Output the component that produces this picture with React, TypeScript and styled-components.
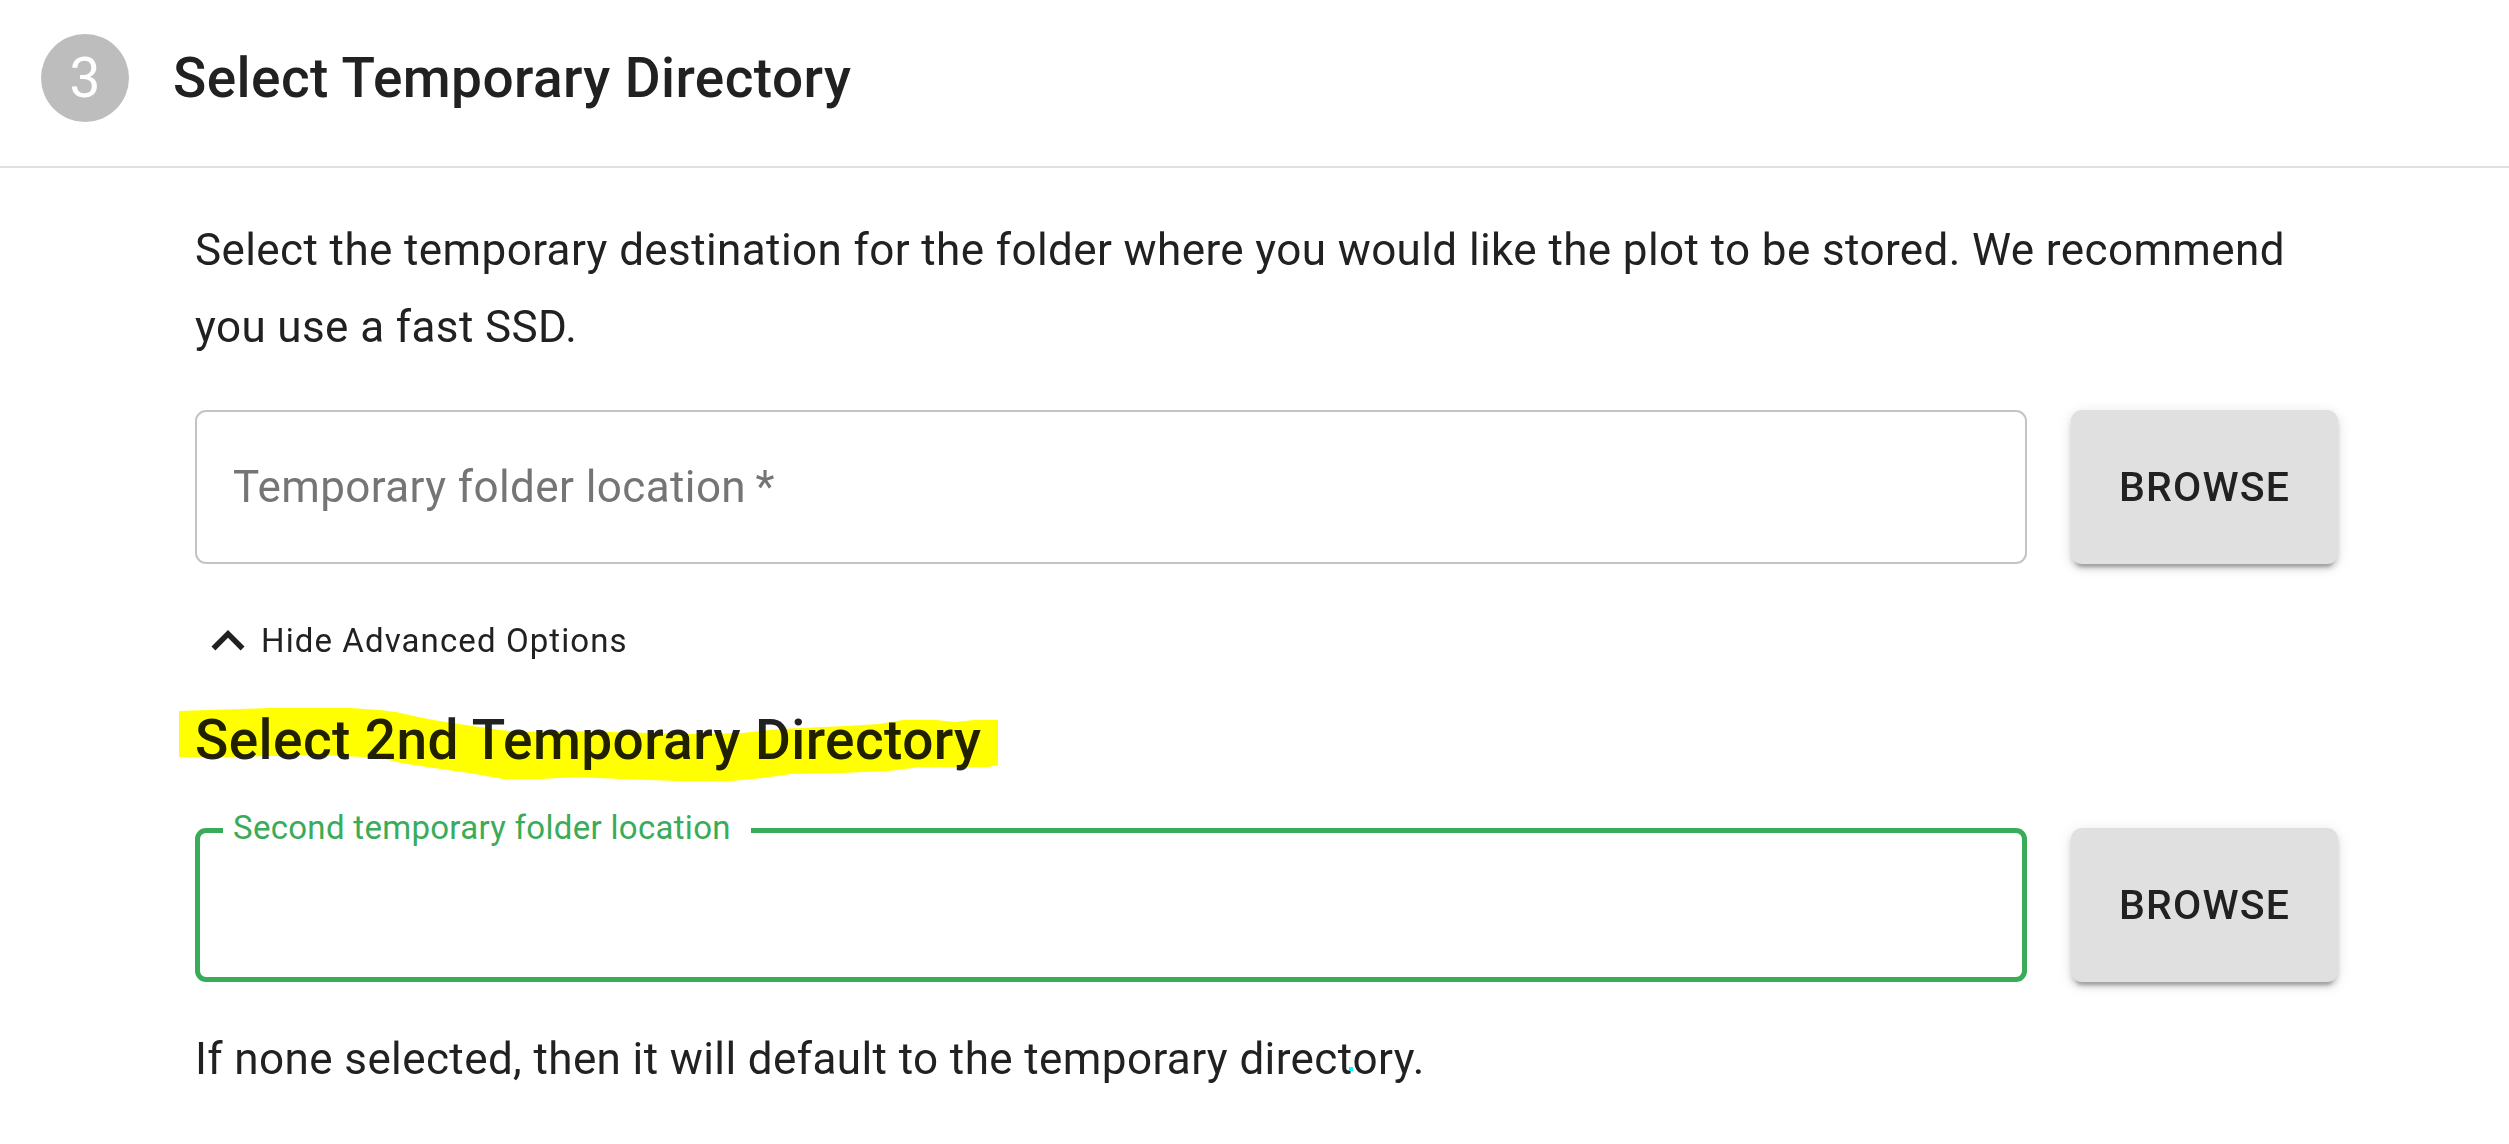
import React from "react";
import styled, { createGlobalStyle, css } from "styled-components";

const ink = "#212121";
const green = "#3aac59";

const GlobalStyle = createGlobalStyle`
  *, *::before, *::after { box-sizing: border-box; }
  body {
    margin: 0;
    background: #fff;
    color: ${ink};
    font-family: Roboto, "Liberation Sans", sans-serif;
    font-size: 44px;
  }
`;

const Header = styled.header`
  display: flex;
  align-items: center;
  gap: 44px;
  padding: 34px 41px 44px;
  border-bottom: 2px solid #e0e0e0;
`;

const StepBadge = styled.span`
  display: flex;
  align-items: center;
  justify-content: center;
  width: 88px;
  height: 88px;
  border-radius: 50%;
  background: #bdbdbd;
  color: #fff;
  font-size: 55px;
  line-height: 88px;
`;

const headingText = css`
  margin: 0;
  font-size: 55px;
  font-weight: 500;
  line-height: 88px;
  letter-spacing: 0.0075em;
`;

const Title = styled.h1`
  ${headingText}
`;

const Content = styled.main`
  display: flex;
  flex-direction: column;
  gap: 44px;
  padding: 44px 171px 44px 195px;
`;

const Text = styled.p<{ $leading: number }>`
  margin: 0;
  line-height: ${(p) => p.$leading}px;
  letter-spacing: 0.009em;
`;

const FieldRow = styled.div`
  display: flex;
  gap: 44px;
`;

const Field = styled.div`
  position: relative;
  flex: 1;
  display: flex;
`;

const Input = styled.input<{ $active?: boolean }>`
  width: 100%;
  height: 154px;
  padding: 0 38px;
  border: ${(p) => (p.$active ? `5px solid ${green}` : "2px solid #c4c4c4")};
  border-radius: 11px;
  background: transparent;
  color: ${ink};
  font: inherit;
  outline: none;
`;

const Label = styled.label<{ $floating?: boolean }>`
  position: absolute;
  white-space: nowrap;
  letter-spacing: 0.009em;
  ${(p) =>
    p.$floating
      ? css`
          top: -22px;
          left: 28px;
          padding: 0 20px 0 10px;
          background: #fff;
          color: ${green};
          font-size: 33px;
          line-height: 44px;
        `
      : css`
          top: 44px;
          left: 38px;
          color: #757575;
          line-height: 66px;
        `}
`;

const BrowseButton = styled.button`
  padding: 0 48px;
  border: 0;
  border-radius: 11px;
  background: #e0e0e0;
  color: ${ink};
  font-family: inherit;
  font-size: 41px;
  font-weight: 500;
  letter-spacing: 0.02857em;
  text-transform: uppercase;
  box-shadow:
    0 8px 3px -5px rgba(0, 0, 0, 0.2),
    0 5px 5px 0 rgba(0, 0, 0, 0.14),
    0 3px 14px 0 rgba(0, 0, 0, 0.12);
`;

const Advanced = styled.section`
  display: flex;
  flex-direction: column;
  align-items: flex-start;
  gap: 22px;
`;

const Toggle = styled.button`
  display: flex;
  align-items: center;
  padding: 0;
  border: 0;
  background: none;
  color: ${ink};
  font-family: inherit;
  font-size: 33px;
  line-height: 66px;
  letter-spacing: 0.03333em;
`;

const Chevron = styled.svg`
  width: 66px;
  height: 66px;
  fill: currentColor;
`;

const MarkedHeading = styled.h2`
  ${headingText}
  position: relative;
`;

const Highlight = styled.svg`
  position: absolute;
  top: 12px;
  left: -16px;
  width: 819px;
  height: 73px;
  fill: #ff0;
  mix-blend-mode: multiply;
  pointer-events: none;
`;

const Speck = styled.span`
  position: relative;

  &::after {
    content: "";
    position: absolute;
    right: 0;
    bottom: 14px;
    width: 4px;
    height: 4px;
    background: #0ff;
  }
`;

const App: React.FC = () => (
  <>
    <GlobalStyle />
    <Header>
      <StepBadge>3</StepBadge>
      <Title>Select Temporary Directory</Title>
    </Header>
    <Content>
      <Text $leading={77}>
        Select the temporary destination for the folder where you would like the
        plot to be stored. We recommend you use a fast SSD.
      </Text>
      <FieldRow>
        <Field>
          <Input id="temporary-folder" type="text" required />
          <Label htmlFor="temporary-folder">Temporary folder location{"\u2009"}*</Label>
        </Field>
        <BrowseButton type="button">Browse</BrowseButton>
      </FieldRow>
      <Advanced>
        <Toggle type="button" aria-expanded="true">
          <Chevron viewBox="0 0 24 24" aria-hidden="true">
            <path d="M12 8l-6 6 1.41 1.41L12 10.83l4.59 4.58L18 14z" />
          </Chevron>
          Hide Advanced Options
        </Toggle>
        <MarkedHeading>
          Select 2nd Temporary Directory
          <Highlight viewBox="179 708 819 73" aria-hidden="true">
            <path d="M179 711L209 710L240 709L271 708H351L379 710L396 712L418 717L445 722L473 726L500 730L522 732L566 731L654 733L687 734L741 733L780 729L846 726L879 724L903 720H936L955 722L974 720H998V765L988 767H920L889 771L840 773L791 774L763 778L732 781H678L621 779L577 777L541 779H503L475 774L434 768L401 763L385 759L363 757L319 755L270 756L231 757H179Z" />
          </Highlight>
        </MarkedHeading>
      </Advanced>
      <FieldRow>
        <Field>
          <Input id="second-temporary-folder" type="text" $active />
          <Label htmlFor="second-temporary-folder" $floating>
            Second temporary folder location
          </Label>
        </Field>
        <BrowseButton type="button">Browse</BrowseButton>
      </FieldRow>
      <Text $leading={66}>
        If none selected, then it will default to the temporary direc<Speck>t</Speck>ory.
      </Text>
    </Content>
  </>
);

export default App;
